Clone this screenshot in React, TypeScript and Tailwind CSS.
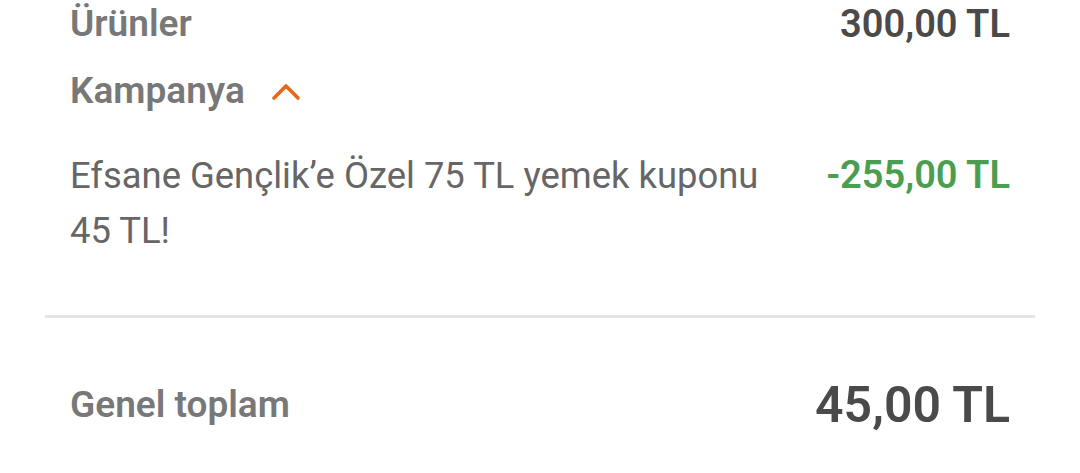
import React from 'react';

const ChevronUp = () => (
  <svg width="30" height="20" viewBox="0 0 30 20" fill="none" className="ml-[26px]">
    <path d="M3 17 L15 5 L27 17" stroke="#e8651b" strokeWidth="3.6" strokeLinecap="round" strokeLinejoin="round" />
  </svg>
);

export default function App() {
  return (
    <div className="w-[1080px] h-[473px] overflow-hidden bg-white font-['Roboto','Liberation_Sans',sans-serif]">
      <div className="px-[45px]">
        <div className="px-[25px]">
          <div className="flex h-[48px] items-center justify-between">
            <span className="text-[37px] font-semibold text-[#787878]">Ürünler</span>
            <span className="text-[38px] font-semibold text-[#4a4a4a]">300,00 TL</span>
          </div>
          <div className="mt-[19px] flex h-[48px] items-center">
            <span className="text-[37px] font-semibold text-[#787878]">Kampanya</span>
            <ChevronUp />
          </div>
          <div className="mt-[33px] flex items-start justify-between">
            <p className="w-[720px] text-[36.4px] leading-[55px] text-[#666666]">
              Efsane Gençlik’e Özel 75 TL yemek kuponu 45 TL!
            </p>
            <span className="text-[38px] font-semibold leading-[55px] text-[#4a9e50]">-255,00 TL</span>
          </div>
        </div>
        <div className="mt-[57px] h-[3px] bg-[#e5e5e5]" />
        <div className="px-[25px]">
          <div className="mt-[57px] flex h-[60px] items-center justify-between">
            <span className="text-[37px] font-semibold text-[#787878]">Genel toplam</span>
            <span className="text-[50px] font-semibold text-[#4a4a4a]">45,00 TL</span>
          </div>
        </div>
      </div>
    </div>
  );
}
